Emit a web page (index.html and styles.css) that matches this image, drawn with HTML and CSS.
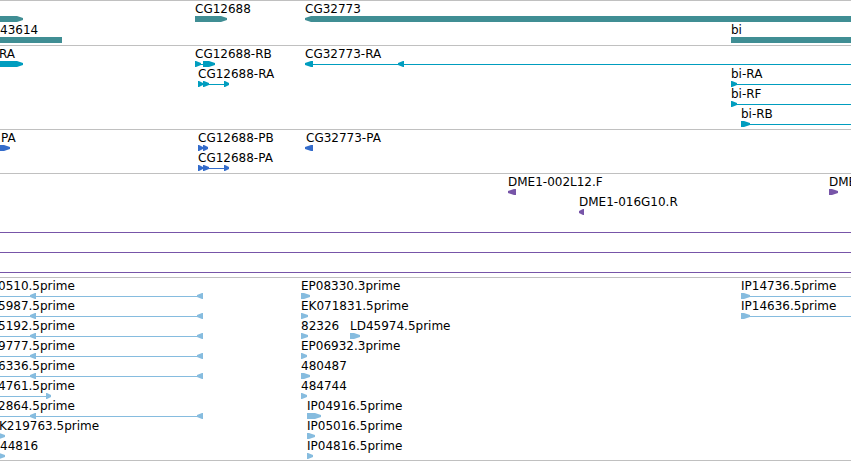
FILE: index.html
```html
<!DOCTYPE html>
<html lang="en">
<head>
  <meta charset="UTF-8">
  <meta name="viewport" content="width=device-width, initial-scale=1.0">
  <title>Genome region</title>
  <link rel="stylesheet" href="styles.css">
</head>
<body>

<main>
  <section class="track genes" id="genes" aria-label="Genes"></section>
  <section class="track transcripts" id="transcripts" aria-label="Transcripts"></section>
  <section class="track proteins" id="proteins" aria-label="Proteins"></section>
  <section class="track clones" id="clones" aria-label="Clones"></section>
  <section class="track ests" id="ests" aria-label="ESTs and insertions"></section>
</main>

<script src="script.js"></script>
</body>
</html>
```
FILE: styles.css
```css
body {
  margin: 0;
  background-color: #fff;
  color: #000;
  font-family: "DejaVu Sans", sans-serif;
  font-size: 12px;
  line-height: 14px;
}
main {
  overflow: hidden;
  border-bottom: 1px solid #c0c0c0;
}
.track {
  border-top: 1px solid #c0c0c0;
  padding: 1px 0 2px;
}
.row {
  position: relative;
  display: flex;
  flex-direction: column;
  height: 20px;
}
.genes, .ests {
  padding-bottom: 1px;
}
.genes .row {
  height: 21px;
}
.labels {
  height: 14px;
}
/* labels start at their feature's position on the map */
.label {
  position: absolute;
  top: 0;
  white-space: nowrap;
}
.glyphs {
  display: block;
  width: 100%;
  height: 6px;
  fill: currentColor;
}
.genes .glyphs {
  color: #408e94;
}
.transcripts .glyphs {
  color: #009dbf;
}
.proteins .glyphs {
  color: #346ccb;
}
.clones .glyphs {
  color: #7755a8;
}
.ests .glyphs {
  color: #86bcdf;
}
```
FILE: script.js
```
// END: feature runs past the right edge of the view
const END = 4000;

// labels: [position, text]
// parts: [type, start, end], type is bar, line, right or left
const estPair = [["line", 0, 198], ["left", 30, 36], ["left", 197, 203]];

const tracks = {
  genes: [
    { labels: [[195, "CG12688"], [305, "CG32773"]],
      parts: [["right", -20, 23], ["right", 195, 227], ["left", 305, END]] },
    { labels: [[0, "43614"], [731, "bi"]],
      parts: [["bar", 0, 62], ["bar", 731, END]] }
  ],
  transcripts: [
    { labels: [[-1, "RA"], [195, "CG12688-RB"], [305, "CG32773-RA"]],
      parts: [["right", -20, 23], ["line", 195, 210], ["right", 195, 201], ["right", 203, 215],
              ["left", 305, 313], ["line", 313, END], ["left", 398, 404]] },
    { labels: [[198, "CG12688-RA"], [731, "bi-RA"]],
      parts: [["line", 198, 226], ["right", 198, 203], ["right", 203, 209], ["right", 224, 229],
              ["right", 731, 737], ["line", 735, END]] },
    { labels: [[731, "bi-RF"]],
      parts: [["right", 731, 737], ["line", 735, END]] },
    { labels: [[741, "bi-RB"]],
      parts: [["right", 741, 750], ["line", 747, END]] }
  ],
  proteins: [
    { labels: [[1, "PA"], [198, "CG12688-PB"], [306, "CG32773-PA"]],
      parts: [["right", -20, 10], ["right", 198, 203], ["right", 203, 208], ["left", 305, 313]] },
    { labels: [[198, "CG12688-PA"]],
      parts: [["line", 198, 226], ["right", 198, 203], ["right", 203, 209], ["right", 224, 229]] }
  ],
  clones: [
    { labels: [[508, "DME1-002L12.F"], [829, "DME1"]],
      parts: [["left", 508, 516], ["right", 829, 838]] },
    { labels: [[579, "DME1-016G10.R"]],
      parts: [["left", 579, 584]] },
    { labels: [], parts: [["line", 0, END]] },
    { labels: [], parts: [["line", 0, END]] },
    { labels: [], parts: [["line", 0, END]] }
  ],
  ests: [
    { labels: [[-2, "0510.5prime"], [301, "EP08330.3prime"], [741, "IP14736.5prime"]],
      parts: [...estPair, ["right", 301, 310], ["right", 741, 750], ["line", 747, END]] },
    { labels: [[-2, "5987.5prime"], [301, "EK071831.5prime"], [741, "IP14636.5prime"]],
      parts: [...estPair, ["right", 301, 308], ["right", 741, 750], ["line", 747, END]] },
    { labels: [[-2, "5192.5prime"], [301, "82326"], [350, "LD45974.5prime"]],
      parts: [...estPair, ["right", 301, 308], ["right", 350, 360]] },
    { labels: [[-2, "9777.5prime"], [301, "EP06932.3prime"]],
      parts: [...estPair, ["right", 301, 307]] },
    { labels: [[-2, "6336.5prime"], [301, "480487"]],
      parts: [...estPair, ["right", 301, 310]] },
    { labels: [[-2, "4761.5prime"], [301, "484744"]],
      parts: [["line", 0, 47], ["right", 46, 51], ["right", 301, 307]] },
    { labels: [[-2, "2864.5prime"], [307, "IP04916.5prime"]],
      parts: [...estPair, ["right", 307, 321]] },
    { labels: [[-1, "K219763.5prime"], [307, "IP05016.5prime"]],
      parts: [["right", -2, 5], ["right", 307, 315]] },
    { labels: [[0, "44816"], [307, "IP04816.5prime"]],
      parts: [["right", -2, 5], ["right", 307, 313]] }
  ]
};

// arrow tips are blunt, two pixels high
function drawPart([type, start, end]) {
  const head = Math.min(6, end - start - 1);
  if (type === "bar") {
    return `<rect x="${start}" y="0" width="${end - start}" height="6"/>`;
  }
  if (type === "line") {
    return `<rect x="${start}" y="3" width="${end - start}" height="1"/>`;
  }
  if (type === "left") {
    return `<polygon points="${end},0 ${start + head},0 ${start},2 ${start},4 ${start + head},6 ${end},6"/>`;
  }
  return `<polygon points="${start},0 ${end - head},0 ${end},2 ${end},4 ${end - head},6 ${start},6"/>`;
}

function drawRow(row) {
  const labels = row.labels
    .map(([x, text]) => `<span class="label" style="left:${x}px">${text}</span>`)
    .join("");
  return `<div class="row">
    <div class="labels">${labels}</div>
    <svg class="glyphs" aria-hidden="true">${row.parts.map(drawPart).join("")}</svg>
  </div>`;
}

for (const id in tracks) {
  document.getElementById(id).innerHTML = tracks[id].map(drawRow).join("");
}
```
